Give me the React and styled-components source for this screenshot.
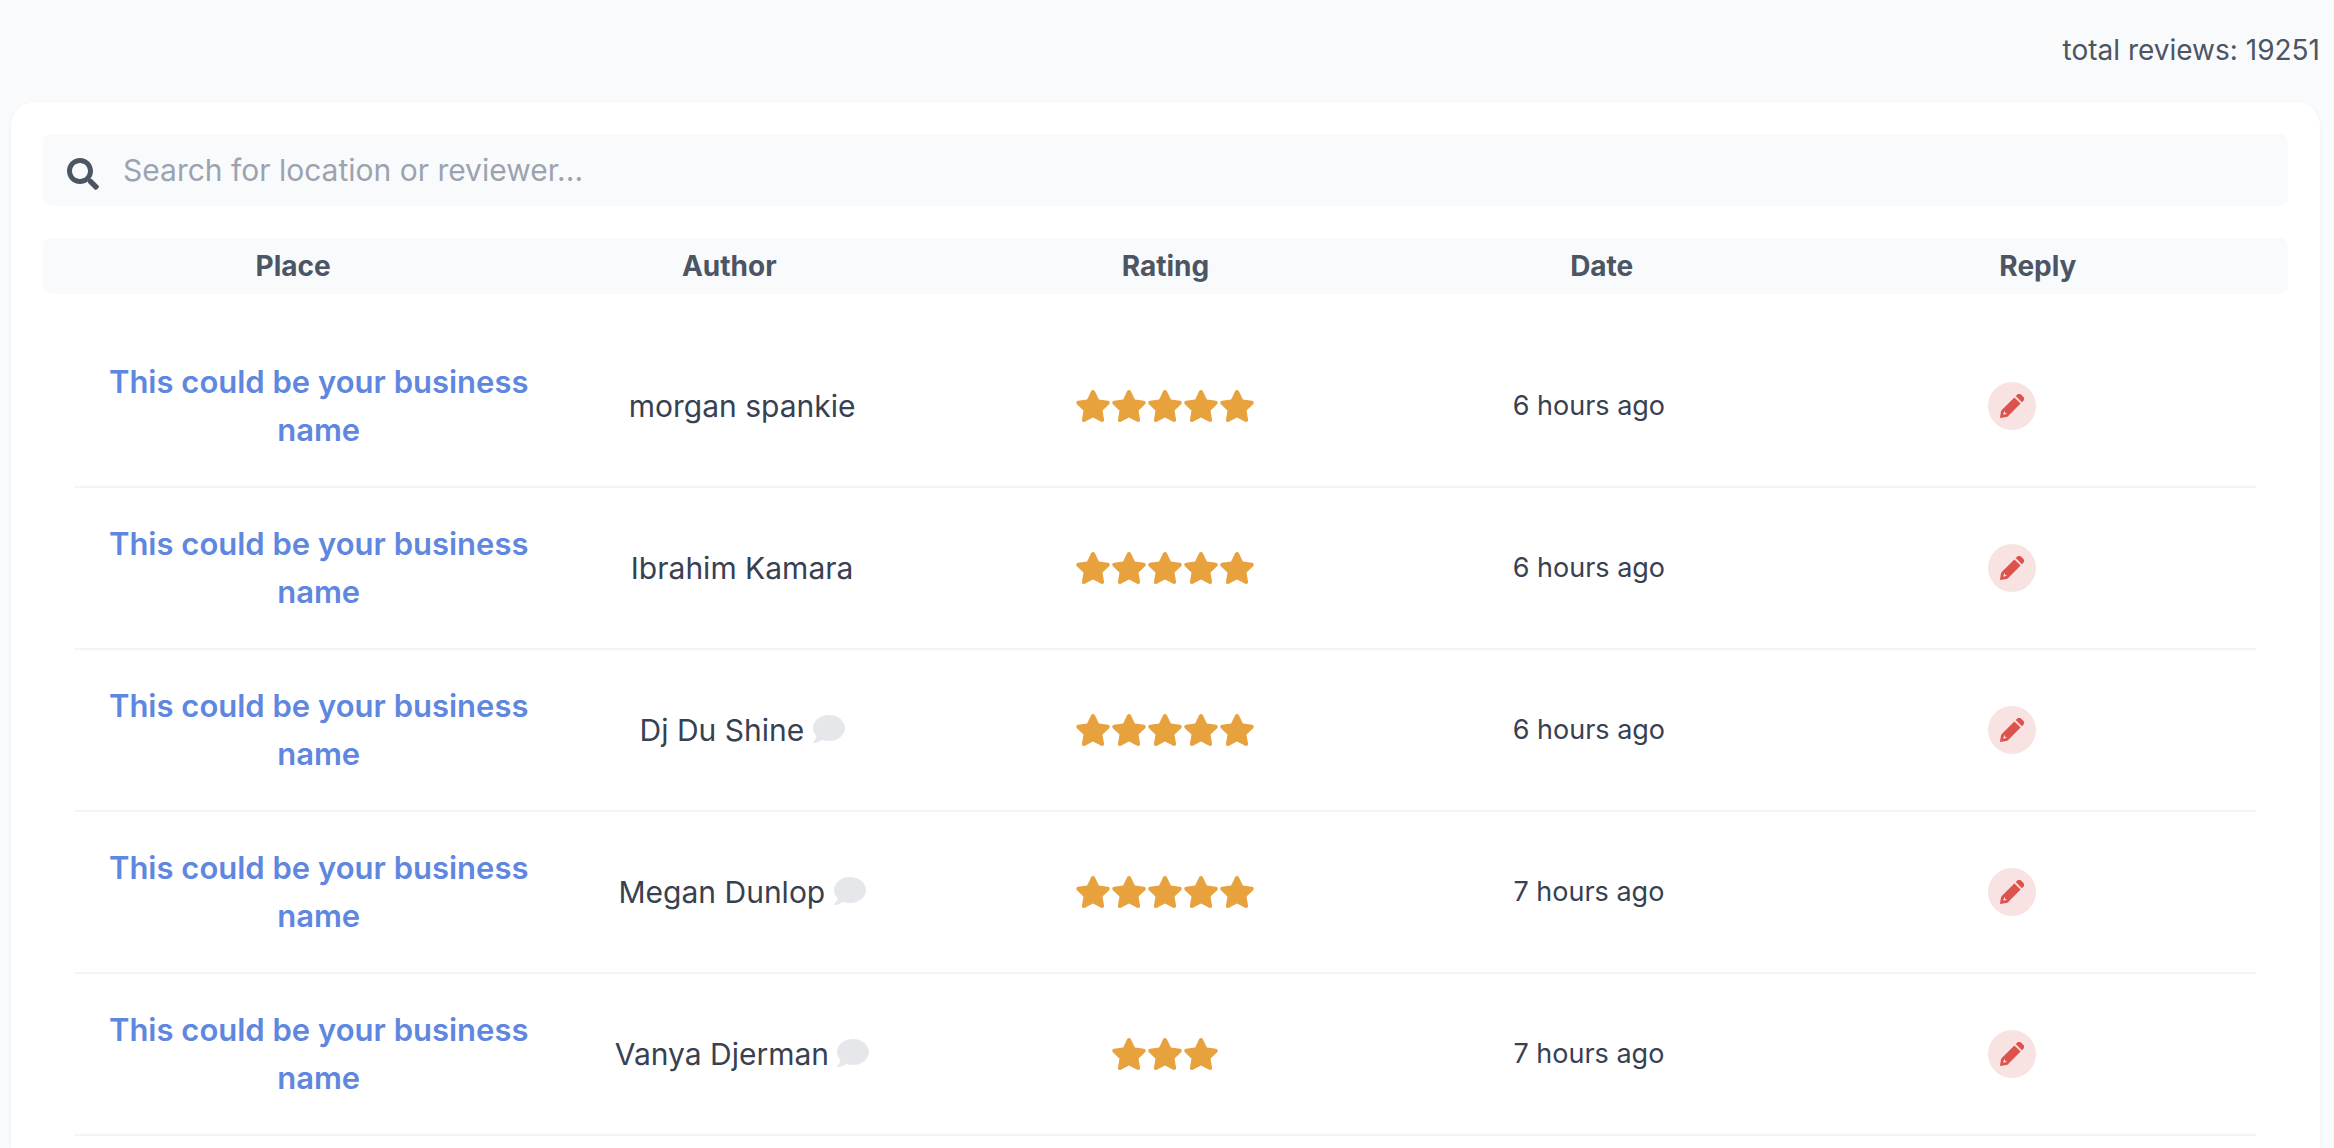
import React, { useState } from "react";
import styled, { createGlobalStyle } from "styled-components";
import { FaComment, FaSearch, FaStar } from "react-icons/fa";

const GlobalStyle = createGlobalStyle`
  *, *::before, *::after { box-sizing: border-box; }
  body {
    margin: 0;
    background: #f9fafc;
    color: #374151;
    font-family: Inter, "Liberation Sans", sans-serif;
    font-size: 30px;
    line-height: 48px;
  }
`;

const Page = styled.main`
  display: flex;
  flex-direction: column;
  min-height: 100vh;
  padding: 30px 14px 0 11px;
`;

const Total = styled.p`
  margin: 0 0 32px;
  text-align: right;
  color: #4b5563;
  font-size: 28px;
  line-height: 40px;
`;

const Card = styled.section`
  flex: 1;
  padding: 32px 32px 0;
  border-radius: 24px 24px 0 0;
  background: #fff;
  box-shadow: 0 2px 6px rgba(0, 0, 0, 0.04);
`;

const SearchBar = styled.label`
  display: flex;
  align-items: center;
  gap: 24px;
  height: 72px;
  padding: 0 24px;
  margin-bottom: 32px;
  border-radius: 8px;
  background: #f9fafc;
  color: #4b5563;
`;

const SearchIcon = styled(FaSearch)`
  flex: none;
  width: 32px;
  height: 32px;
  margin-top: 8px;
`;

const SearchInput = styled.input`
  flex: 1;
  min-width: 0;
  height: 48px;
  padding: 0;
  border: 0;
  outline: 0;
  background: transparent;
  color: #374151;
  font: inherit;
  &::placeholder { color: #9ca3af; opacity: 1; }
`;

const Table = styled.table`
  display: block;
  border-collapse: collapse;
`;

const Head = styled.thead`
  display: block;
`;

const HeadRow = styled.tr`
  display: grid;
  grid-template-columns: repeat(5, minmax(0, 1fr));
  padding: 8px 32px;
  border-radius: 8px;
  background: #f9fafc;
`;

const HeadCell = styled.th`
  padding: 0;
  color: #4b5563;
  font-size: 28px;
  font-weight: 700;
  line-height: 40px;
  text-align: center;
`;

const Body = styled.tbody`
  display: block;
  padding: 32px 32px 0;
`;

const Row = styled.tr`
  display: grid;
  grid-template-columns: repeat(5, minmax(0, 1fr));
  align-items: center;
  padding: 32px;
  border-bottom: 2px solid #f3f4f6;
`;

const Cell = styled.td`
  padding: 0;
  text-align: center;
  font-size: ${(p) => (p.$small ? "27px" : "30px")};
`;

const PlaceLink = styled.a`
  display: block;
  color: #5f87e0;
  font-size: 31px;
  font-weight: 600;
  text-decoration: none;
`;

const CommentIcon = styled(FaComment)`
  width: 32px;
  height: 32px;
  color: #e5e7eb;
  vertical-align: -4px;
`;

const Stars = styled.span`
  display: flex;
  justify-content: center;
`;

const Star = styled(FaStar)`
  width: 36px;
  height: 32px;
  color: #e8a23d;
`;

const ReplyButton = styled.button`
  display: inline-flex;
  align-items: center;
  justify-content: center;
  width: 48px;
  height: 48px;
  padding: 0;
  border: 0;
  border-radius: 50%;
  background: #f8e2e2;
  color: #dd524c;
  vertical-align: top;
  cursor: pointer;
`;

const PencilIcon = () => (
  <svg width="24" height="24" viewBox="0 0 24 24" fill="currentColor" aria-hidden="true">
    <path d="M15.7 2.1 16.9.9a3.2 3.2 0 0 1 4.5 0l1.7 1.7a3.2 3.2 0 0 1 0 4.5L21.9 8.3Z" />
    <path
      fillRule="evenodd"
      d="M14.4 3.4 20.6 9.6 8.2 22C7.7 22.5 7 22.9 6.3 23.1L0 24 .9 17.7C1.1 17 1.5 16.3 2 15.8ZM4.2 16.8 3.2 20.8 7.2 19.8 5.3 18.9Z"
    />
  </svg>
);

const columns = ["Place", "Author", "Rating", "Date", "Reply"];

const reviews = [
  { author: "morgan spankie", rating: 5, date: "6 hours ago", comment: false },
  { author: "Ibrahim Kamara", rating: 5, date: "6 hours ago", comment: false },
  { author: "Dj Du Shine", rating: 5, date: "6 hours ago", comment: true },
  { author: "Megan Dunlop", rating: 5, date: "7 hours ago", comment: true },
  { author: "Vanya Djerman", rating: 3, date: "7 hours ago", comment: true },
];

function ReviewRow({ review }) {
  return (
    <Row>
      <Cell>
        <PlaceLink href="#place">This could be your business name</PlaceLink>
      </Cell>
      <Cell>
        {review.author}
        {review.comment && <> <CommentIcon aria-hidden="true" /></>}
      </Cell>
      <Cell>
        <Stars role="img" aria-label={`${review.rating} stars`}>
          {Array.from({ length: review.rating }, (_, i) => (
            <Star key={i} />
          ))}
        </Stars>
      </Cell>
      <Cell $small>{review.date}</Cell>
      <Cell>
        <ReplyButton type="button" aria-label={`Reply to ${review.author}`}>
          <PencilIcon />
        </ReplyButton>
      </Cell>
    </Row>
  );
}

export default function App() {
  const [query, setQuery] = useState("");
  const shown = reviews.filter((r) =>
    r.author.toLowerCase().includes(query.toLowerCase())
  );

  return (
    <>
      <GlobalStyle />
      <Page>
        <Total>total reviews: 19251</Total>
        <Card>
          <SearchBar>
            <SearchIcon aria-hidden="true" />
            <SearchInput
              type="text"
              aria-label="Search reviews"
              placeholder="Search for location or reviewer..."
              value={query}
              onChange={(e) => setQuery(e.target.value)}
            />
          </SearchBar>
          <Table>
            <Head>
              <HeadRow>
                {columns.map((name) => (
                  <HeadCell key={name} scope="col">{name}</HeadCell>
                ))}
              </HeadRow>
            </Head>
            <Body>
              {shown.map((r) => (
                <ReviewRow key={r.author} review={r} />
              ))}
            </Body>
          </Table>
        </Card>
      </Page>
    </>
  );
}
